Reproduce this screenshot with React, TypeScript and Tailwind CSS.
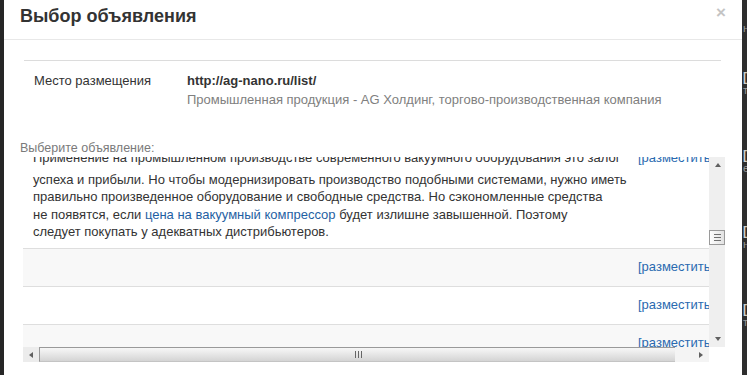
import React from "react";

const font = { fontFamily: '"Liberation Sans", Arial, sans-serif' };

function UpArrow() {
  return <div className="w-0 h-0 border-l-[3px] border-r-[3px] border-b-[4px] border-l-transparent border-r-transparent border-b-[#606060]" />;
}
function DownArrow() {
  return <div className="w-0 h-0 border-l-[3px] border-r-[3px] border-t-[4px] border-l-transparent border-r-transparent border-t-[#606060]" />;
}
function LeftArrow() {
  return <div className="w-0 h-0 border-t-[3px] border-b-[3px] border-r-[4px] border-t-transparent border-b-transparent border-r-[#606060]" />;
}
function RightArrow() {
  return <div className="w-0 h-0 border-t-[3px] border-b-[3px] border-l-[4px] border-t-transparent border-b-transparent border-l-[#606060]" />;
}

function VScroll() {
  return (
    <div className="w-[16px] h-[190px] bg-[#efefef] flex flex-col shrink-0">
      <div className="h-[16px] flex items-center justify-center pl-[1px]"><UpArrow /></div>
      <div className="h-[57px]" />
      <div className="h-[15px] border border-[#9a9a9a] bg-linear-to-r from-[#fdfdfd] to-[#e2e2e2] flex flex-col items-center justify-center gap-[2px]">
        <div className="w-[7px] h-[1px] bg-[#707070]" />
        <div className="w-[7px] h-[1px] bg-[#707070]" />
        <div className="w-[7px] h-[1px] bg-[#707070]" />
      </div>
      <div className="flex-1" />
      <div className="h-[16px] flex items-center justify-center pl-[1px]"><DownArrow /></div>
    </div>
  );
}

function HScroll() {
  return (
    <div className="h-[15px] w-[686px] flex bg-[#f4f4f4]">
      <div className="w-[16px] h-full bg-[#ececec] flex items-center justify-center"><LeftArrow /></div>
      <div className="w-[636px] h-full border-t border-l border-[#9a9a9a] border-b border-b-[#c4c4c4] bg-linear-to-b from-[#f7f7f7] via-[#e6e6e6] to-[#d4d4d4] flex items-center justify-center">
        <div className="flex gap-[2px] ml-[2px]">
          <div className="w-[1px] h-[7px] bg-[#666]" />
          <div className="w-[1px] h-[7px] bg-[#666]" />
          <div className="w-[1px] h-[7px] bg-[#666]" />
        </div>
      </div>
      <div className="w-[17px] h-full bg-[#f4f4f4]" />
      <div className="w-[17px] h-full bg-[#f4f4f4] flex items-center justify-center"><RightArrow /></div>
    </div>
  );
}

function Row({ bg }: { bg: string }) {
  return (
    <div className={`flex h-[38px] border-b border-[#dedede] ${bg}`}>
      <div className="w-[615px] shrink-0" />
      <div className="pt-[9px] text-[13px] leading-[17.5px] text-[#2a6ab0] whitespace-nowrap">[разместить]</div>
    </div>
  );
}

function Frag({ mt, a, b }: { mt: string; a: string; b: string }) {
  return (
    <div className={`flex flex-col ${mt}`}>
      <div className="text-[#d0d0d0] font-bold leading-[14px]">{a}</div>
      <div className="text-[#9a9a9a] leading-[12px] text-[11px]">{b}</div>
    </div>
  );
}

export default function App() {
  return (
    <div className="w-[747px] h-[375px] bg-[#2e2e2e] flex overflow-hidden" style={font}>
      <div className="w-[4px] shrink-0 bg-[#262626]" />
      <div className="w-[738px] h-full bg-white flex flex-col shrink-0 overflow-hidden">
        <div className="h-[40px] border-b border-[#e8e8e8] flex items-start justify-between shrink-0">
          <div className="ml-[16px] mt-[5px] text-[18px] leading-[22px] font-bold text-[#333]">Выбор объявления</div>
          <div className="mr-[16px] mt-[3px] text-[17px] leading-[20px] font-bold text-[#c4c4c4]">×</div>
        </div>
        <div className="mt-[20px] ml-[20px] w-[697px] border-t border-[#dcdcdc] flex pt-[10px] text-[13px] leading-[19px]">
          <div className="w-[163px] pl-[10px] text-[#333] shrink-0">Место размещения</div>
          <div className="flex flex-col">
            <div className="font-bold text-[#333]">http://ag-nano.ru/list/</div>
            <div className="text-[#808080]">Промышленная продукция - AG Холдинг, торгово-производственная компания</div>
          </div>
        </div>
        <div className="mt-[30px] ml-[16px] text-[12.5px] leading-[18px] text-[#7a7a7a]">Выберите объявление:</div>
        <div className="ml-[19px] w-[702px] h-[205px] flex flex-col shrink-0">
          <div className="flex h-[190px]">
            <div className="w-[686px] h-full overflow-hidden">
              <div className="w-[760px] -mt-[18px]">
                <div className="flex border-b border-[#dedede] bg-white">
                  <div className="w-[615px] shrink-0 pl-[10px] pt-[10px] pb-[7px] text-[13px] leading-[17.5px] text-[#333]">
                    <div className="whitespace-nowrap mb-[4px]">Применение на промышленном производстве современного вакуумного оборудования это залог</div>
                    <div className="whitespace-nowrap">успеха и прибыли. Но чтобы модернизировать производство подобными системами, нужно иметь</div>
                    <div className="whitespace-nowrap">правильно произведенное оборудование и свободные средства. Но сэкономленные средства</div>
                    <div className="whitespace-nowrap">не появятся, если <span className="text-[#1f5fa3]">цена на вакуумный компрессор</span> будет излишне завышенной. Поэтому</div>
                    <div className="whitespace-nowrap">следует покупать у адекватных дистрибьютеров.</div>
                  </div>
                  <div className="pt-[10px] text-[13px] leading-[17.5px] text-[#2a6ab0] whitespace-nowrap">[разместить]</div>
                </div>
                <Row bg="bg-[#f8f8f8]" />
                <Row bg="bg-white" />
                <Row bg="bg-[#f8f8f8]" />
              </div>
            </div>
            <VScroll />
          </div>
          <HScroll />
        </div>
      </div>
      <div className="flex-1 flex flex-col text-[12px] pl-[1px] overflow-hidden">
        <div className="mt-[22px] text-[#9a9a9a] text-[11px] leading-[12px]">н</div>
        <Frag mt="mt-[36px]" a="[" b="т" />
        <Frag mt="mt-[52px]" a="[" b="е" />
        <Frag mt="mt-[50px]" a="[" b="н" />
        <Frag mt="mt-[52px]" a="[" b="т" />
      </div>
    </div>
  );
}
